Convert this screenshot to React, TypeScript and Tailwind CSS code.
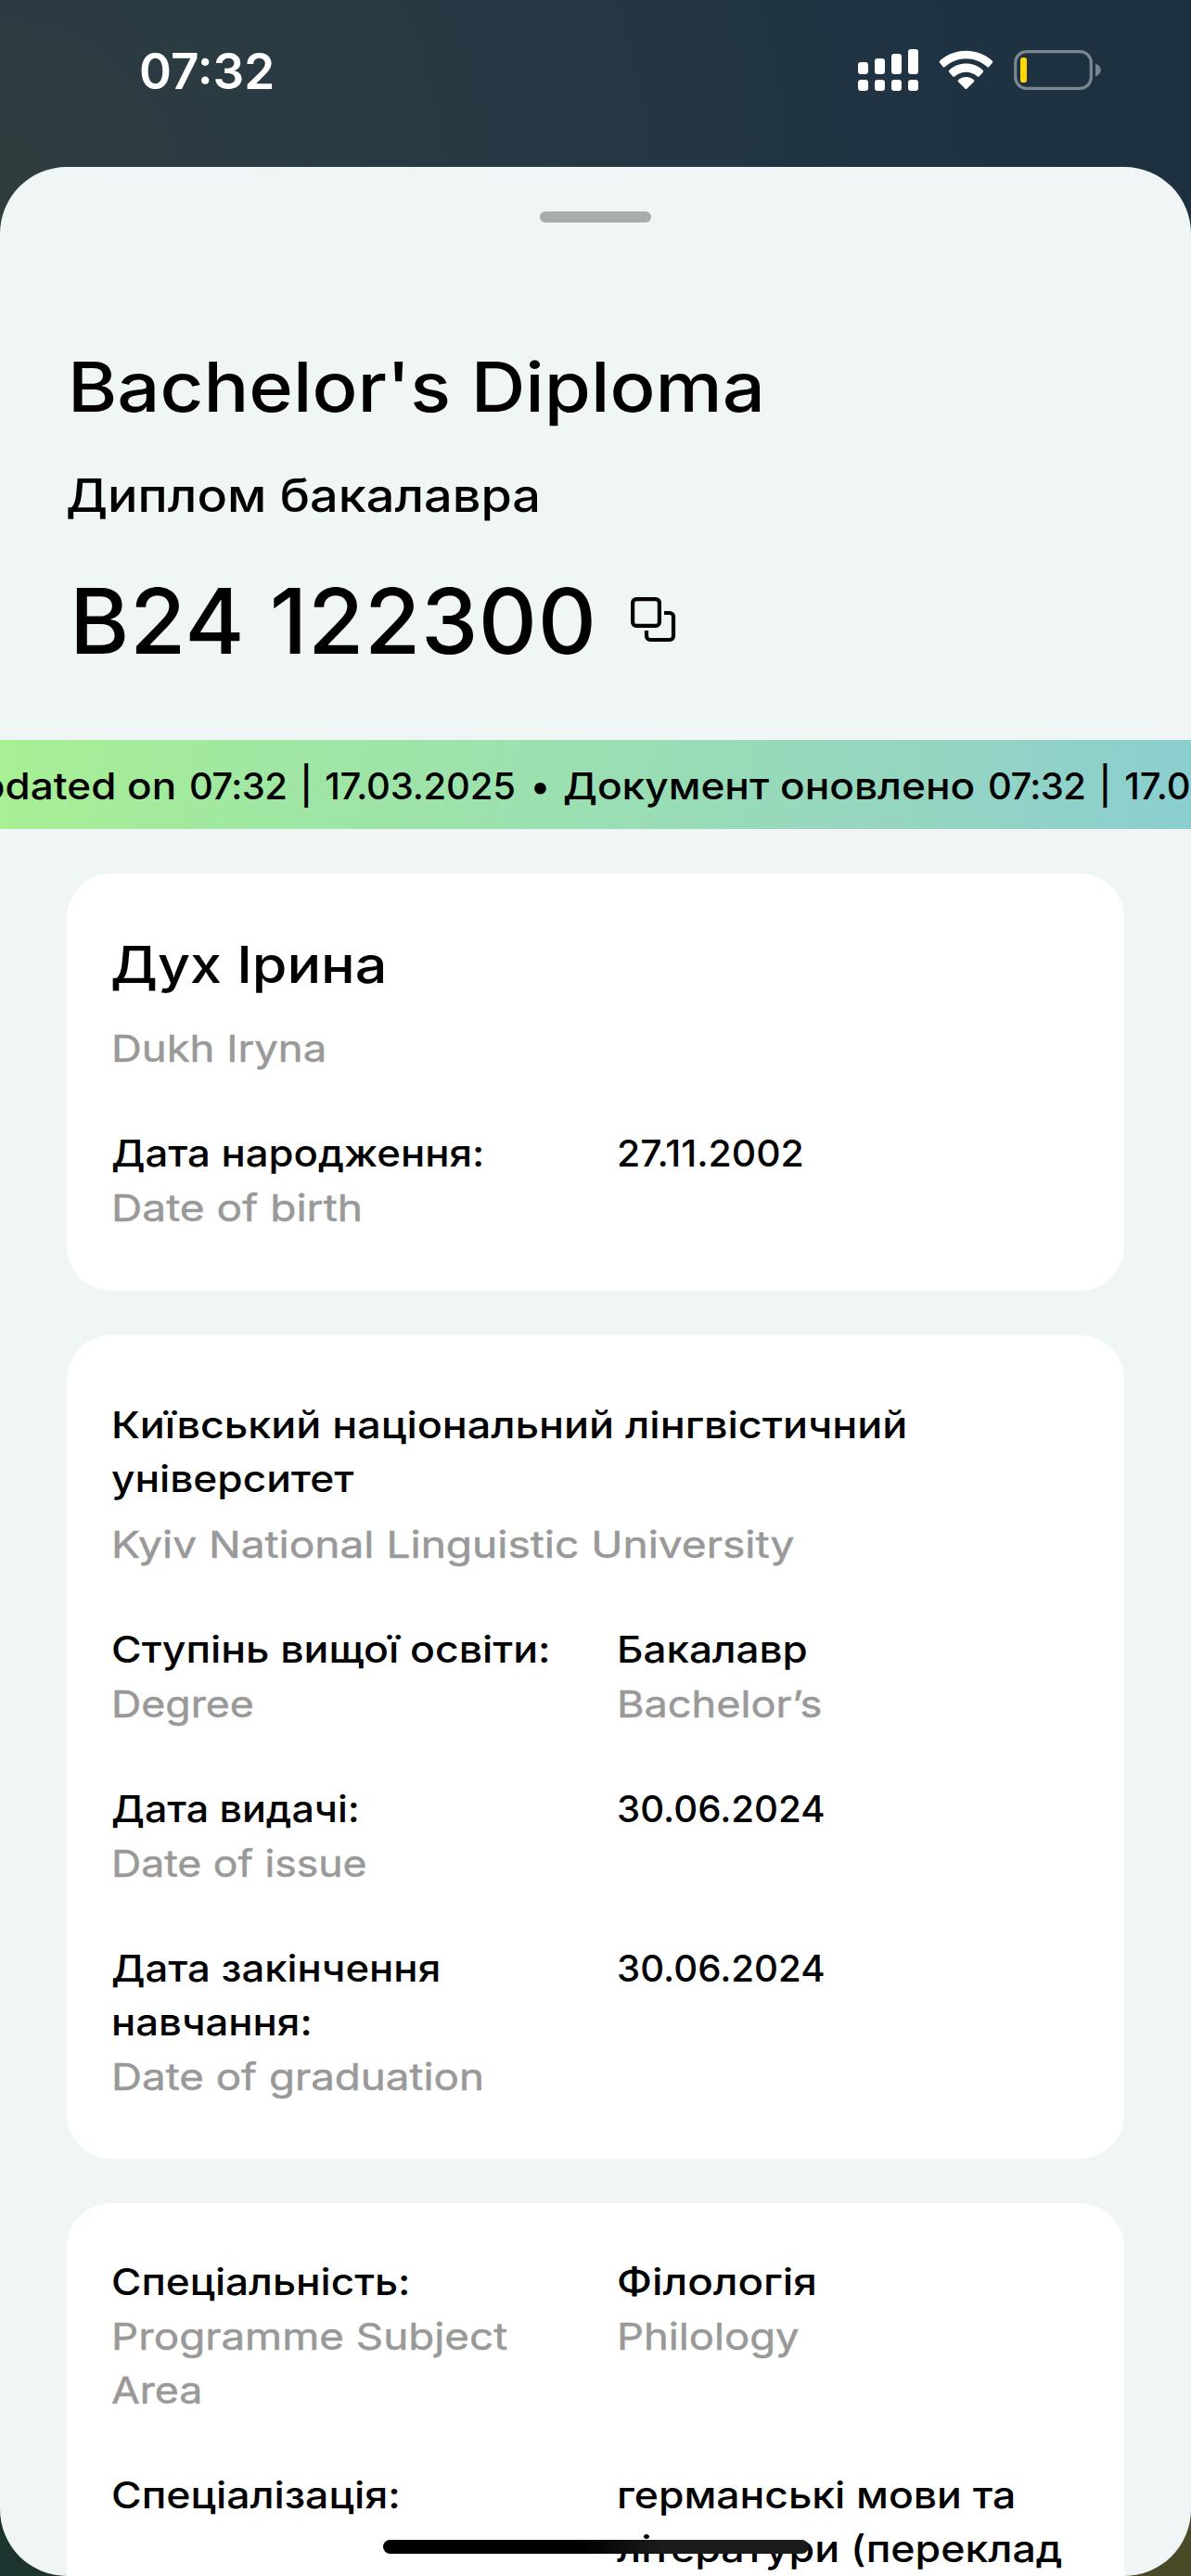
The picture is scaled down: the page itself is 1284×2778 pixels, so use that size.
import type { ReactNode } from 'react';

function Ua({ children, className = '' }: { children: ReactNode; className?: string }) {
  return <div className={`origin-left text-[40px] leading-[58px] font-medium whitespace-nowrap text-black ${className}`}>{children}</div>;
}

function En({ children, className = '' }: { children: ReactNode; className?: string }) {
  return <div className={`origin-left text-[40px] leading-[58px] whitespace-nowrap text-[#999999] [-webkit-text-stroke:0.5px_#999999] ${className}`}>{children}</div>;
}

function Row({ label, value }: { label: ReactNode; value: ReactNode }) {
  return (
    <div className="grid grid-cols-[545px_1fr]">
      <div className="flex flex-col items-start">{label}</div>
      <div className="flex flex-col items-start">{value}</div>
    </div>
  );
}

function Card({ children, className }: { children: ReactNode; className: string }) {
  return <section className={`flex shrink-0 flex-col gap-[55px] rounded-[48px] bg-white px-12 ${className}`}>{children}</section>;
}

function StatusBar() {
  return (
    <header className="flex h-[180px] shrink-0 items-start justify-between pr-24 pl-[150px]">
      <div className="pt-[45px] text-[53px] leading-[64px] font-semibold text-white">07:32</div>
      <div className="flex pt-[52px]">
        <svg width="66" height="48" viewBox="0 0 66 48" fill="#fff">
          <rect x="0" y="15" width="11" height="13" rx="3.2" />
          <rect x="18" y="11" width="11" height="17" rx="3.2" />
          <rect x="36" y="6" width="11" height="22" rx="3.2" />
          <rect x="54" y="1" width="11" height="27" rx="3.2" />
          <rect x="0" y="34" width="11" height="12" rx="3.2" />
          <rect x="18" y="34" width="11" height="12" rx="3.2" />
          <rect x="36" y="34" width="11" height="12" rx="3.2" />
          <rect x="54" y="34" width="11" height="12" rx="3.2" />
        </svg>
        <svg className="ml-[21px]" width="60" height="48" viewBox="0 0 60 48" fill="#fff">
          <path d="M1.3 13.5C17-1 42-1 57.7 13.5Q58.9 14.6 57.8 15.7L54.4 19.9Q53.3 21 52.1 19.9C39.5 8.2 19.5 8.2 6.9 19.9Q5.7 21 4.6 19.9L1.2 15.7Q.1 14.6 1.3 13.5Z" />
          <path d="M11.3 23.8C21.5 14.2 37.5 14.2 47.7 23.8Q48.8 24.9 47.7 26L43.8 30.2Q42.7 31.2 41.5 30.2C34.5 24.2 24.5 24.2 17.5 30.2Q16.3 31.2 15.2 30.2L11.3 26Q10.2 24.9 11.3 23.8Z" />
          <path d="M21.2 34C26 30 33 30 37.8 34Q39 35 37.9 36.2L30.6 43.5Q29.5 44.6 28.4 43.5L21.1 36.2Q20 35 21.2 34Z" />
        </svg>
        <svg className="ml-[21px]" width="95" height="48" viewBox="0 0 95 48">
          <rect x="1.7" y="3.7" width="81.6" height="39.6" rx="12" fill="none" stroke="#7a878f" strokeWidth="3.2" />
          <rect x="7" y="10" width="7" height="27" rx="2.8" fill="#ffd60a" />
          <path d="M88 16.5Q93.8 19 93.8 23.5Q93.8 28 88 30.5Z" fill="#7a878f" />
        </svg>
      </div>
    </header>
  );
}

function CopyIcon() {
  return (
    <svg width="50" height="50" viewBox="0 0 50 50" fill="none" stroke="#000" strokeWidth="4.2">
      <rect x="2.1" y="2.1" width="28.8" height="28.8" rx="4" />
      <path d="M36 17H42A4 4 0 0 1 46 21V42A4 4 0 0 1 42 46H21A4 4 0 0 1 17 42V36" />
    </svg>
  );
}

function Ticker() {
  return (
    <div className="mt-[69px] flex h-24 shrink-0 items-center overflow-hidden bg-[linear-gradient(98deg,#a8f094_0%,#a0e7a2_22%,#9adfb2_50%,#94d5c2_78%,#8aced0_100%)] pt-[3px] text-[40px] leading-[48px] font-medium whitespace-nowrap text-black">
      <div className="flex w-[607px] shrink-0 justify-end">
        <span className="origin-right scale-x-[1.1]">Document updated on</span>
        <span className="ml-[14px] tracking-[-0.6px]">07:32</span>
        <span className="ml-[14px]">|</span>
        <span className="ml-[13px] tracking-[-0.2px]">17.03.2025</span>
        <span className="mr-[14px] ml-[16px]">•</span>
      </div>
      <span className="w-[446px] shrink-0">
        <span className="inline-block origin-left scale-x-[1.105]">Документ оновлено</span>
      </span>
      <span className="ml-3 tracking-[-0.6px]">07:32</span>
      <span className="ml-[14px]">|</span>
      <span className="ml-[14px]">17.03.2025</span>
    </div>
  );
}

export default function App() {
  return (
    <div className="relative flex h-[2778px] w-[1284px] flex-col overflow-hidden bg-[linear-gradient(90deg,#1d332f_0%,#4a4a28_100%)] font-[Inter,sans-serif]">
      <div className="absolute inset-x-0 top-0 h-[300px] bg-[radial-gradient(circle_at_0_220px,#303d3e_0%,#2b3b42_20%,#263744_48%,#1f3342_75%,#1c3040_100%)]" />
      <div className="relative flex min-h-0 flex-1 flex-col">
        <StatusBar />
        <main className="flex min-h-0 flex-1 flex-col overflow-hidden rounded-[72px] bg-[#f0f6f6]">
          <div className="mt-12 h-3 w-[120px] shrink-0 self-center rounded-full bg-[#a8acac]" />
          <div className="mt-[132px] flex shrink-0 flex-col px-[72px] text-black">
            <h1 className="ml-px origin-left scale-x-[1.098] self-start text-[74px] leading-[90px] font-medium whitespace-nowrap">Bachelor's Diploma</h1>
            <h2 className="mt-[42px] -ml-px origin-left scale-x-[1.091] self-start text-[49.5px] leading-[60px] font-medium whitespace-nowrap">Диплом бакалавра</h2>
            <div className="mt-[47px] ml-[3px] flex h-[118px]">
              <div className="text-[98px] leading-[118px] font-medium tracking-[0.54px]">В24 122300</div>
              <div className="mt-[33px] ml-[37px]">
                <CopyIcon />
              </div>
            </div>
          </div>
          <Ticker />
          <div className="mx-[72px] mt-12 flex flex-col gap-12">
            <Card className="h-[450px] pt-[65px]">
              <div className="flex flex-col items-start">
                <div className="-ml-px origin-left scale-x-[1.108] text-[55px] leading-[66px] font-medium text-black">Дух Ірина</div>
                <En className="mt-[29px] scale-x-[1.136]">Dukh Iryna</En>
              </div>
              <Row
                label={<><Ua className="scale-x-[1.092]">Дата народження:</Ua><En className="mt-px scale-x-[1.152]">Date of birth</En></>}
                value={<Ua className="scale-x-[1.022]">27.11.2002</Ua>}
              />
            </Card>
            <Card className="h-[888px] pt-[68px]">
              <div className="flex flex-col items-start">
                <Ua className="scale-x-[1.122]">Київський національний лінгвістичний</Ua>
                <Ua className="scale-x-[1.106]">університет</Ua>
                <En className="mt-[13px] scale-x-[1.151]">Kyiv National Linguistic University</En>
              </div>
              <Row
                label={<><Ua className="scale-x-[1.114]">Ступінь вищої освіти:</Ua><En className="mt-px scale-x-[1.117]">Degree</En></>}
                value={<><Ua className="scale-x-[1.1]">Бакалавр</Ua><En className="mt-px scale-x-[1.127]">Bachelor’s</En></>}
              />
              <Row
                label={<><Ua className="scale-x-[1.074]">Дата видачі:</Ua><En className="mt-px scale-x-[1.113]">Date of issue</En></>}
                value={<Ua className="scale-x-[1.005]">30.06.2024</Ua>}
              />
              <Row
                label={
                  <>
                    <Ua className="scale-x-[1.092]">Дата закінчення</Ua>
                    <Ua className="scale-x-[1.092]">навчання:</Ua>
                    <En className="mt-px scale-x-[1.143]">Date of graduation</En>
                  </>
                }
                value={<Ua className="scale-x-[1.005]">30.06.2024</Ua>}
              />
            </Card>
            <Card className="h-[620px] pt-[56px]">
              <Row
                label={
                  <>
                    <Ua className="scale-x-[1.104]">Спеціальність:</Ua>
                    <En className="mt-px scale-x-[1.144]">Programme Subject</En>
                    <En className="scale-x-[1.116]">Area</En>
                  </>
                }
                value={<><Ua className="scale-x-[1.142]">Філологія</Ua><En className="mt-px scale-x-[1.135]">Philology</En></>}
              />
              <Row
                label={<Ua className="scale-x-[1.114]">Спеціалізація:</Ua>}
                value={<><Ua className="scale-x-[1.112]">германські мови та</Ua><Ua className="scale-x-[1.117]">літератури (переклад</Ua></>}
              />
            </Card>
          </div>
        </main>
      </div>
      <div className="absolute top-[2739px] left-[413px] h-[15px] w-[459px] rounded-full bg-[linear-gradient(90deg,#000_46%,#1c1c1c_66%)]" />
    </div>
  );
}
